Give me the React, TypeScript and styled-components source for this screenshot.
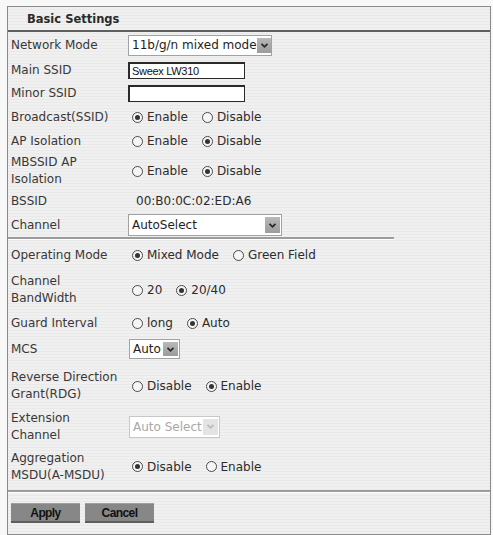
import React from 'react';
import styled, { createGlobalStyle } from 'styled-components';

const GlobalStyle = createGlobalStyle`
  html, body {
    margin: 0;
    padding: 0;
    background: #f8f8f8;
  }
  body {
    font-family: "DejaVu Sans", Verdana, sans-serif;
    color: #333;
  }
`;

// striped scan-like background used by the panel
const stripes = `repeating-linear-gradient(180deg, #f0f0f0 0px, #f0f0f0 2px, #e9e9e9 2px, #e9e9e9 3px)`;

const Page = styled.div`
  padding: 6px 0 0 7px;
`;

const Panel = styled.div`
  width: 482px;
  border: 1px solid #8a8a8a;
  background: ${stripes};
`;

const Header = styled.div`
  height: 23px;
  display: flex;
  align-items: center;
  padding-left: 19px;
  border-bottom: 2px solid #5f5f5f;
  font-size: 11.5px;
  font-weight: bold;
  color: #2a2a2a;
`;

const Section = styled.div<{ $partial?: boolean }>`
  width: ${p => (p.$partial ? '386px' : 'auto')};
  border-bottom: 2px solid #9c9c9c;
  box-shadow: 0 1px 0 #ffffff;
  margin-bottom: 1px;
`;

const Row = styled.div<{ $h: number }>`
  height: ${p => p.$h}px;
  display: flex;
  align-items: center;
`;

const Label = styled.div`
  width: 120px;
  padding-left: 3px;
  box-sizing: border-box;
  font-size: 12px;
  line-height: 17px;
  color: #383838;
  flex-shrink: 0;
`;

const Value = styled.div<{ $indent?: number }>`
  flex: 1;
  display: flex;
  align-items: center;
  padding-left: ${p => p.$indent ?? 0}px;
  font-size: 12px;
  color: #2c2c2c;
  white-space: nowrap;
`;

const RadioGroup = styled.div`
  display: flex;
  align-items: center;
  gap: 14px;
  padding-left: 4px;
`;

const Option = styled.label`
  display: inline-flex;
  align-items: center;
  gap: 4px;
  font-size: 12px;
  color: #2c2c2c;
`;

const RadioMark = styled.span<{ $checked?: boolean }>`
  position: relative;
  width: 11px;
  height: 11px;
  box-sizing: border-box;
  border: 1px solid #4a4a4a;
  border-radius: 50%;
  background: #f6f6f6;

  &::after {
    content: '';
    display: ${p => (p.$checked ? 'block' : 'none')};
    position: absolute;
    left: 2px;
    top: 2px;
    width: 5px;
    height: 5px;
    border-radius: 50%;
    background: #333;
  }
`;

const SelectBox = styled.div<{ $w: number; $h: number; $disabled?: boolean }>`
  width: ${p => p.$w}px;
  height: ${p => p.$h}px;
  box-sizing: border-box;
  border: 1px solid ${p => (p.$disabled ? '#c8c8c8' : '#a2a2a2')};
  background: #ffffff;
  display: flex;
  align-items: center;
  padding-left: 3px;
  font-size: 12px;
  white-space: nowrap;
  overflow: hidden;
  color: ${p => (p.$disabled ? '#a8a8a8' : '#1e1e1e')};
`;

const ArrowButton = styled.span<{ $disabled?: boolean }>`
  margin-left: auto;
  margin-right: 1px;
  width: 15px;
  height: calc(100% - 4px);
  flex-shrink: 0;
  display: flex;
  align-items: center;
  justify-content: center;
  background: ${p => (p.$disabled ? '#e4e4e4' : 'linear-gradient(#b8b8b8, #9c9c9c)')};
  color: ${p => (p.$disabled ? '#bcbcbc' : '#2a2a2a')};
`;

const TextInput = styled.div`
  width: 117px;
  height: 17px;
  box-sizing: border-box;
  border: 1px solid #2a2a2a;
  border-top-width: 2px;
  border-left-width: 2px;
  background: #ffffff;
  display: flex;
  align-items: center;
  padding-left: 2px;
  font-family: "Liberation Sans", Arial, sans-serif;
  font-size: 11px;
  letter-spacing: -0.3px;
  color: #111;
`;

const Footer = styled.div`
  display: flex;
  gap: 5px;
  padding: 10px 3px 11px;
`;

const Button = styled.button`
  width: 69px;
  height: 20px;
  padding: 0;
  border: none;
  border-top: 1px solid #a0a0a0;
  border-bottom: 2px solid #5e5e5e;
  background: #878787;
  font-family: "Liberation Sans", Arial, sans-serif;
  font-size: 12px;
  font-weight: bold;
  letter-spacing: -0.6px;
  color: #111;
`;

const Chevron = () => (
  <svg width="9" height="7" viewBox="0 0 9 7" fill="none" stroke="currentColor" strokeWidth="1.8">
    <path d="M1.5 1.8 L4.5 4.8 L7.5 1.8" />
  </svg>
);

type Opt = { label: string; checked?: boolean };

const Radios: React.FC<{ options: Opt[] }> = ({ options }) => (
  <RadioGroup>
    {options.map(o => (
      <Option key={o.label}>
        <RadioMark $checked={o.checked} />
        {o.label}
      </Option>
    ))}
  </RadioGroup>
);

const Select: React.FC<{ value: string; w: number; h: number; disabled?: boolean }> = ({ value, w, h, disabled }) => (
  <SelectBox $w={w} $h={h} $disabled={disabled}>
    {value}
    <ArrowButton $disabled={disabled}>
      <Chevron />
    </ArrowButton>
  </SelectBox>
);

const App: React.FC = () => {
  return (
    <Page>
      <GlobalStyle />
      <Panel>
        <Header>Basic Settings</Header>

        <Section $partial>
          <Row $h={26}>
            <Label>Network Mode</Label>
            <Value>
              <Select value="11b/g/n mixed mode" w={144} h={21} />
            </Value>
          </Row>
          <Row $h={24}>
            <Label>Main SSID</Label>
            <Value>
              <TextInput>Sweex LW310</TextInput>
            </Value>
          </Row>
          <Row $h={23}>
            <Label>Minor SSID</Label>
            <Value>
              <TextInput />
            </Value>
          </Row>
          <Row $h={24}>
            <Label>Broadcast(SSID)</Label>
            <Value>
              <Radios options={[{ label: 'Enable', checked: true }, { label: 'Disable' }]} />
            </Value>
          </Row>
          <Row $h={24}>
            <Label>AP Isolation</Label>
            <Value>
              <Radios options={[{ label: 'Enable' }, { label: 'Disable', checked: true }]} />
            </Value>
          </Row>
          <Row $h={36}>
            <Label>MBSSID AP<br />Isolation</Label>
            <Value>
              <Radios options={[{ label: 'Enable' }, { label: 'Disable', checked: true }]} />
            </Value>
          </Row>
          <Row $h={24}>
            <Label>BSSID</Label>
            <Value $indent={8}>00:B0:0C:02:ED:A6</Value>
          </Row>
          <Row $h={24}>
            <Label>Channel</Label>
            <Value>
              <Select value="AutoSelect" w={154} h={22} />
            </Value>
          </Row>
        </Section>

        <Section>
          <Row $h={30}>
            <Label>Operating Mode</Label>
            <Value>
              <Radios options={[{ label: 'Mixed Mode', checked: true }, { label: 'Green Field' }]} />
            </Value>
          </Row>
          <Row $h={40}>
            <Label>Channel<br />BandWidth</Label>
            <Value>
              <Radios options={[{ label: '20' }, { label: '20/40', checked: true }]} />
            </Value>
          </Row>
          <Row $h={26}>
            <Label>Guard Interval</Label>
            <Value>
              <Radios options={[{ label: 'long' }, { label: 'Auto', checked: true }]} />
            </Value>
          </Row>
          <Row $h={26}>
            <Label>MCS</Label>
            <Value $indent={1}>
              <Select value="Auto" w={51} h={20} />
            </Value>
          </Row>
          <Row $h={48}>
            <Label>Reverse Direction<br />Grant(RDG)</Label>
            <Value>
              <Radios options={[{ label: 'Disable' }, { label: 'Enable', checked: true }]} />
            </Value>
          </Row>
          <Row $h={33}>
            <Label>Extension<br />Channel</Label>
            <Value $indent={1}>
              <Select value="Auto Select" w={91} h={22} disabled />
            </Value>
          </Row>
          <Row $h={47}>
            <Label>Aggregation<br />MSDU(A-MSDU)</Label>
            <Value>
              <Radios options={[{ label: 'Disable', checked: true }, { label: 'Enable' }]} />
            </Value>
          </Row>
        </Section>

        <Footer>
          <Button>Apply</Button>
          <Button>Cancel</Button>
        </Footer>
      </Panel>
    </Page>
  );
};

export default App;
